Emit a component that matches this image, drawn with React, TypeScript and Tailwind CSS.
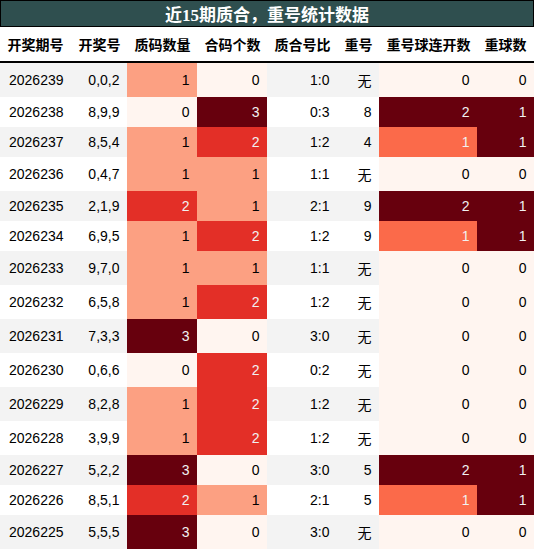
const rows: [string, string, number, number, string, string, number, number][] = [
  ['2026239', '0,0,2', 1, 0, '1:0', '无', 0, 0],
  ['2026238', '8,9,9', 0, 3, '0:3', '8', 2, 1],
  ['2026237', '8,5,4', 1, 2, '1:2', '4', 1, 1],
  ['2026236', '0,4,7', 1, 1, '1:1', '无', 0, 0],
  ['2026235', '2,1,9', 2, 1, '2:1', '9', 2, 1],
  ['2026234', '6,9,5', 1, 2, '1:2', '9', 1, 1],
  ['2026233', '9,7,0', 1, 1, '1:1', '无', 0, 0],
  ['2026232', '6,5,8', 1, 2, '1:2', '无', 0, 0],
  ['2026231', '7,3,3', 3, 0, '3:0', '无', 0, 0],
  ['2026230', '0,6,6', 0, 2, '0:2', '无', 0, 0],
  ['2026229', '8,2,8', 1, 2, '1:2', '无', 0, 0],
  ['2026228', '3,9,9', 1, 2, '1:2', '无', 0, 0],
  ['2026227', '5,2,2', 3, 0, '3:0', '5', 2, 1],
  ['2026226', '8,5,1', 2, 1, '2:1', '5', 1, 1],
  ['2026225', '5,5,5', 3, 0, '3:0', '无', 0, 0],
]

const headers = ['开奖期号', '开奖号', '质码数量', '合码个数', '质合号比', '重号', '重号球连开数', '重球数']
const widths = [71, 56, 70, 70, 70, 42, 98, 57]

// Reds gradient, one scale per column range
const scale4 = ['bg-[#fff5f0] text-black', 'bg-[#fca082] text-black', 'bg-[#e32f27] text-[#f1f1f1]', 'bg-[#67000d] text-[#f1f1f1]']
const scale3 = ['bg-[#fff5f0] text-black', 'bg-[#fb6a4a] text-[#f1f1f1]', 'bg-[#67000d] text-[#f1f1f1]']
const scale2 = ['bg-[#fff5f0] text-black', 'bg-[#67000d] text-[#f1f1f1]']

const cell = 'px-[7.5px] py-[7px] text-right whitespace-nowrap'

export default function App() {
  return (
    <div className="w-[534px] bg-white font-['Liberation_Sans','Noto_Sans_CJK_SC',sans-serif] text-[14px] leading-[normal] text-black">
      <div className="border border-black bg-[#2f4f4f] text-center text-[17px] font-bold text-white font-['Liberation_Serif','Noto_Sans_CJK_SC',serif] leading-[normal]">
        近15期质合，重号统计数据
      </div>
      <table className="w-[534px] table-fixed border-collapse">
        <colgroup>
          {widths.map((w, i) => <col key={i} style={{ width: w }} />)}
        </colgroup>
        <thead>
          <tr className="border-b-2 border-black">
            {headers.map(h => (
              <th key={h} className="px-[7.5px] py-[7px] text-center font-bold whitespace-nowrap">{h}</th>
            ))}
          </tr>
        </thead>
        <tbody>
          {rows.map((r, i) => (
            <tr key={r[0]} className={i % 2 === 0 ? 'bg-[#f3f3f3]' : 'bg-white'}>
              <td className={cell}>{r[0]}</td>
              <td className={cell}>{r[1]}</td>
              <td className={`${cell} ${scale4[r[2]]}`}>{r[2]}</td>
              <td className={`${cell} ${scale4[r[3]]}`}>{r[3]}</td>
              <td className={cell}>{r[4]}</td>
              <td className={cell}>{r[5]}</td>
              <td className={`${cell} ${scale3[r[6]]}`}>{r[6]}</td>
              <td className={`${cell} ${scale2[r[7]]}`}>{r[7]}</td>
            </tr>
          ))}
        </tbody>
      </table>
    </div>
  )
}
